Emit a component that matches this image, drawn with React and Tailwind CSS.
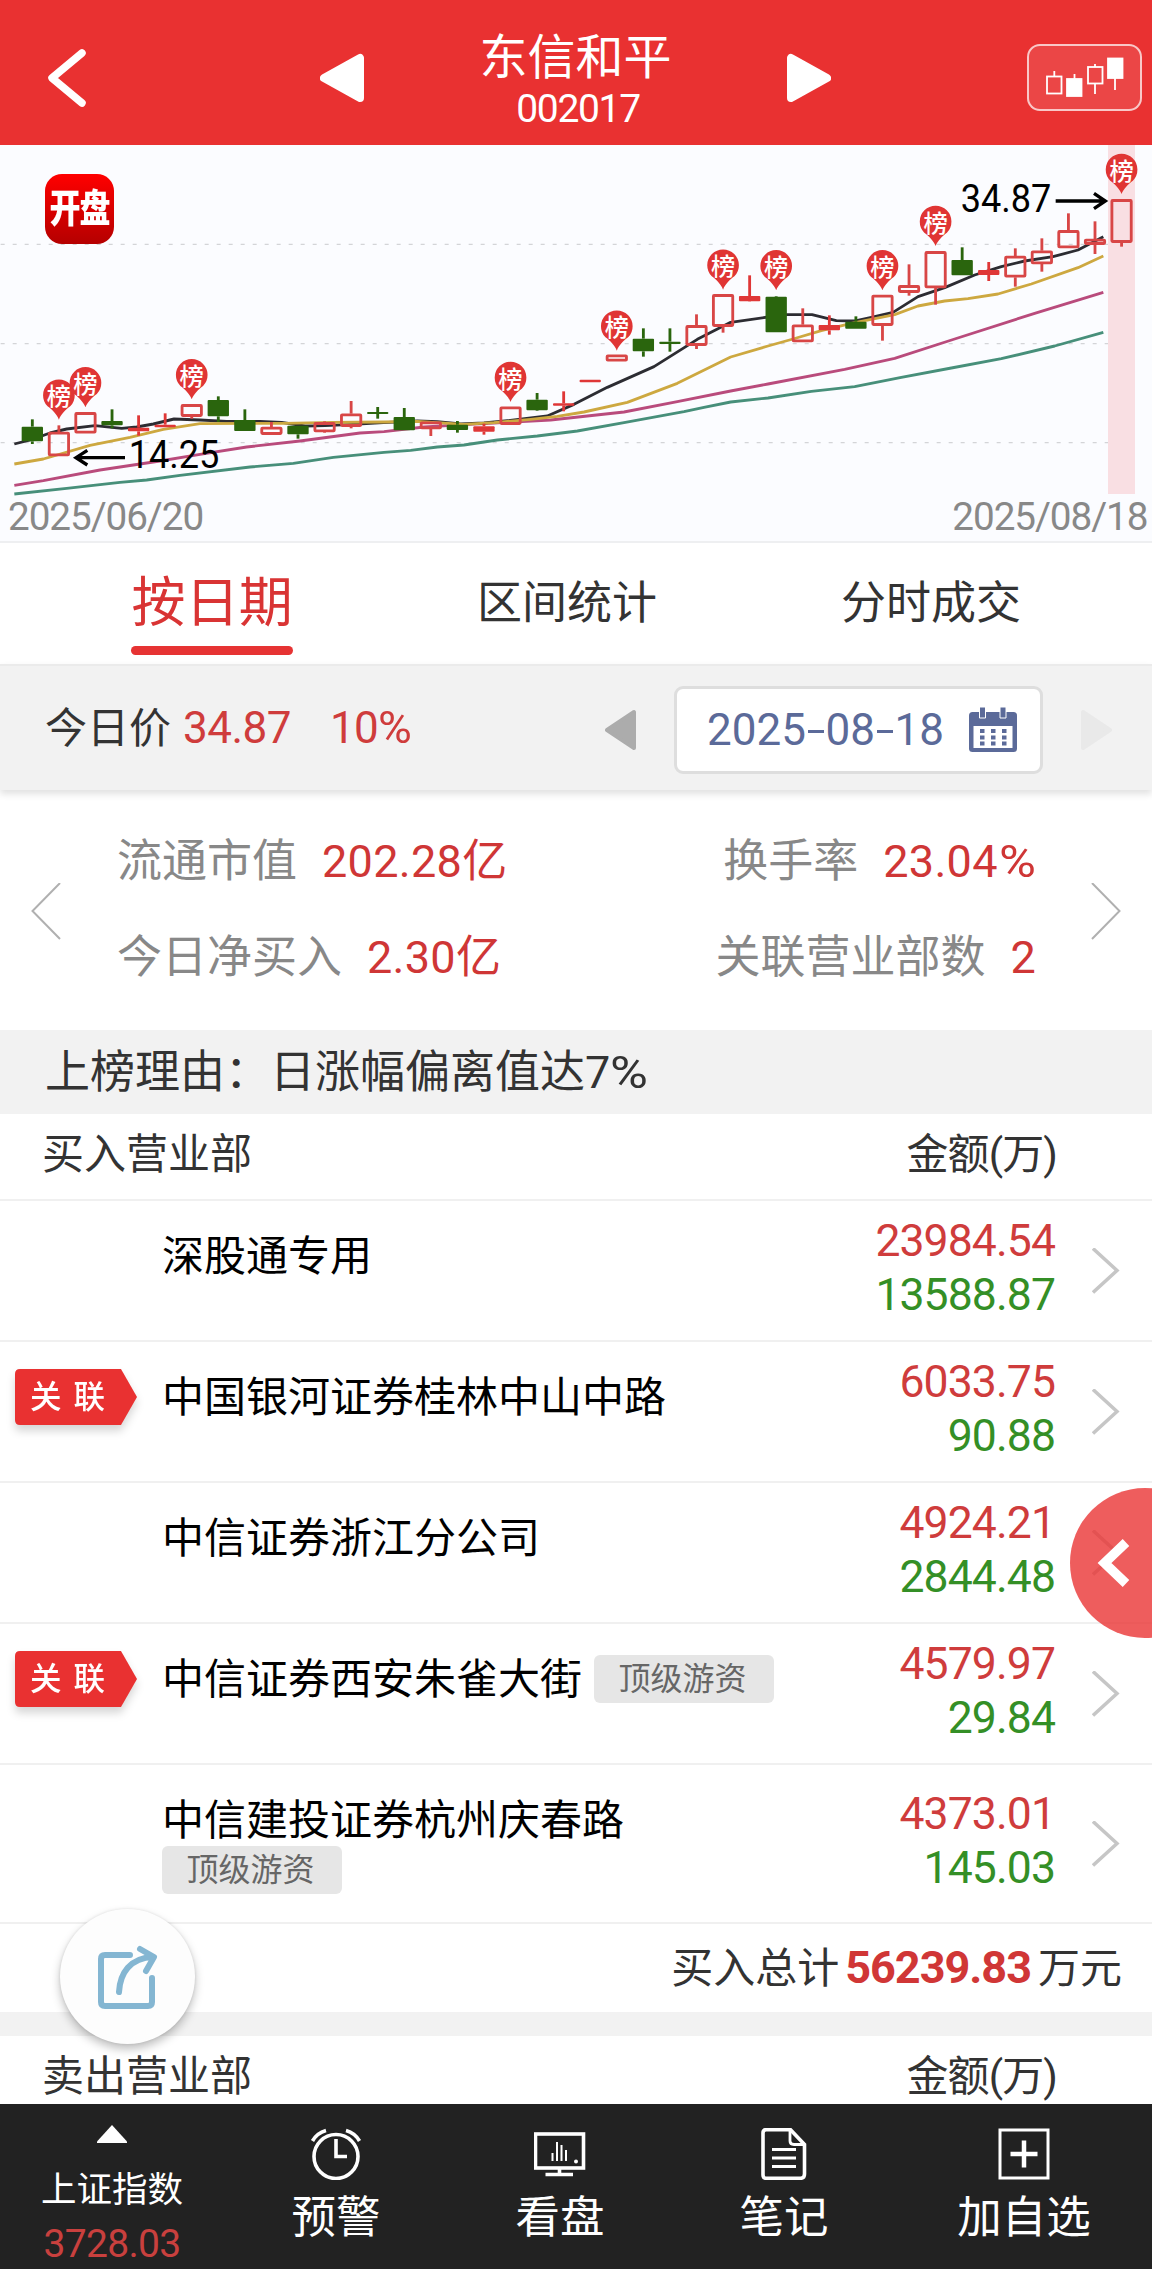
import React from "react";

const CANDLES = [
  ["g", 845, 889, 823, 897],
  ["r", 861, 933, 841, 933],
  ["r", 802, 865, 802, 865],
  ["g", 828, 841, 793, 850],
  ["f", 848, 859, 811, 872],
  ["f", 839, 847, 805, 847],
  ["r", 778, 815, 778, 821],
  ["g", 765, 814, 754, 831],
  ["g", 825, 858, 793, 858],
  ["r", 846, 869, 831, 869],
  ["g", 842, 868, 842, 881],
  ["r", 832, 861, 829, 863],
  ["r", 806, 845, 768, 850],
  ["g", 801, 807, 786, 821],
  ["g", 816, 856, 789, 856],
  ["r", 830, 852, 830, 873],
  ["g", 839, 855, 828, 863],
  ["f", 844, 860, 836, 869],
  ["r", 785, 839, 785, 839],
  ["g", 764, 796, 744, 798],
  ["f", 775, 782, 739, 799],
  ["f", 704, 712, 704, 712],
  ["r", 629, 649, 629, 649],
  ["g", 581, 619, 550, 635],
  ["g", 590, 597, 550, 620],
  ["r", 541, 602, 508, 612],
  ["r", 448, 545, 448, 563],
  ["f", 453, 469, 391, 470],
  ["g", 455, 562, 453, 562],
  ["r", 539, 591, 490, 591],
  ["f", 540, 556, 511, 569],
  ["g", 530, 551, 514, 551],
  ["r", 450, 542, 450, 587],
  ["r", 421, 443, 358, 452],
  ["r", 319, 429, 319, 479],
  ["g", 345, 391, 307, 391],
  ["f", 375, 390, 351, 408],
  ["r", 333, 397, 310, 425],
  ["r", 317, 357, 280, 380],
  ["r", 256, 309, 205, 309],
  ["r", 282, 299, 229, 327],
  ["r", 163, 293, 163, 305],
];

const PINS = [
  [1, 824], [2, 787], [6, 763], [18, 771], [22, 617],
  [26, 434], [28, 436], [32, 436], [34, 303], [41, 147],
];

const LINES = [
  ["#478f7a", "43,1047 200,1030 360,1012 440,1005 540,991 750,966 880,955 1000,937 1152,922 1232,916 1312,906 1392,900 1492,885 1612,873 1732,858 1872,833 2052,800 2112,787 2192,771 2304,759 2434,739 2564,725 2704,697 2854,669 3004,641 3164,603 3310,562"],
  ["#b94b7c", "43,1021 130,1007 300,975 480,948 600,928 740,906 900,888 1080,864 1152,860 1272,846 1392,839 1482,834 1652,825 1872,801 2032,770 2192,738 2304,717 2534,673 2684,640 2864,582 3104,505 3310,442"],
  ["#2c2c32", "43,897 97,883 150,864 200,852 285,842 365,850 410,846 460,837 522,822 600,825 680,829 780,829 845,832 915,843 975,842 1060,838 1150,833 1252,828 1312,830 1382,837 1452,834 1522,827 1642,813 1722,778 1822,727 1962,665 2092,583 2192,532 2304,516 2362,509 2436,509 2509,527 2566,528 2614,517 2679,502 2754,455 2834,428 2924,390 3004,365 3074,348 3159,335 3234,315 3310,275"],
  ["#cda840", "43,957 130,942 270,901 390,877 490,853 600,836 850,835 1000,832 1152,831 1252,829 1392,838 1482,833 1592,823 1672,814 1752,801 1882,772 2032,715 2192,636 2304,603 2379,582 2464,557 2554,535 2684,509 2754,483 2834,468 2904,461 2994,447 3094,417 3234,368 3310,333"],
];

const CHART_FONT = 'Roboto, "Noto Sans CJK SC", sans-serif';

function Candle({ i, c }) {
  const [kind, top, bottom, high, low] = c;
  const x = 97 + 79.7 * i;
  const color = kind === "g" ? "#2a650d" : kind === "f" ? "#df3737" : "#d84646";
  return (
    <g stroke={color} strokeWidth="8.500">
      {high < top && <line x1={x} x2={x} y1={high} y2={top} />}
      {low > bottom && <line x1={x} x2={x} y1={bottom} y2={low} />}
      {kind === "r" ? (
        <rect x={x - 29} y={top + 3.5} width="58" height={bottom - top - 7} rx="2" fill="none" strokeWidth="8.500" />
      ) : (
        <rect x={x - 32} y={top} width="64" height={bottom - top} rx="3" fill={color} stroke="none" />
      )}
    </g>
  );
}

function Chart() {
  return (
    <svg viewBox="0 0 3456 1188" className="block h-[396px] w-full bg-[#fbfcff]" fontFamily={CHART_FONT}>
      {[298, 596, 893].map((y) => (
        <line key={y} x1="2" x2="3396" y1={y} y2={y} stroke="#d3d4d7" strokeWidth="3.5" strokeDasharray="12 24" />
      ))}
      <rect x="3324" y="0" width="81" height="1047" fill="#f9dfe3" />
      {LINES.map(([color, points]) => (
        <polyline key={color} points={points} fill="none" stroke={color} strokeWidth="8.500" strokeLinejoin="round" />
      ))}
      {CANDLES.map((c, i) => (
        <Candle key={i} i={i} c={c} />
      ))}
      {PINS.map(([i, y]) => (
        <g key={i} transform={`translate(${97 + 79.7 * i} ${y})`}>
          <path d="M0 0C-6-16-20-30-34-40A47.500 47.500 0 1 1 34-40C20-30 6-16 0 0Z" fill="#e03534" />
          <text y="-43" textAnchor="middle" fontSize="73" fontWeight="500" fill="#fff">榜</text>
        </g>
      ))}
      <g stroke="#000" strokeWidth="10" fill="none">
        <path d="M3167 168H3312M3282 145L3316 168L3282 191" />
        <path d="M375 938H232M262 916L228 938L262 960" />
      </g>
      <text x="2882" y="200" fontSize="115" textLength="272" lengthAdjust="spacingAndGlyphs">34.87</text>
      <text x="386" y="970" fontSize="115" textLength="272" lengthAdjust="spacingAndGlyphs">14.25</text>
      <g fontSize="116" fill="#888" letterSpacing="-3.2">
        <text x="24" y="1154">2025/06/20</text>
        <text x="2857" y="1154">2025/08/18</text>
      </g>
    </svg>
  );
}

function Header() {
  return (
    <header className="flex h-[145px] items-center bg-[#e93131] text-white">
      <svg className="ml-[44px] mt-[10px] h-[62px] w-[46px]" viewBox="0 0 46 62" fill="none" stroke="#fff" strokeWidth="7.500" strokeLinecap="round" strokeLinejoin="round">
        <path d="M38 6L8 31L38 56" />
      </svg>
      <svg className="ml-[230px] mt-[10px] h-[50px] w-[44px]" viewBox="0 0 44 50" fill="#fff" stroke="#fff" strokeWidth="8" strokeLinejoin="round">
        <path d="M40 5V45L4 25Z" />
      </svg>
      <div className="flex w-[423px] flex-col items-center pt-[14px]">
        <div className="h-[60px] text-[48px] leading-[60px]">东信和平</div>
        <div className="mt-[-1px] h-[44px] pl-[5px] text-[39px] leading-[44px] tracking-[-1.300px]">002017</div>
      </div>
      <svg className="mt-[10px] h-[50px] w-[44px]" viewBox="0 0 44 50" fill="#fff" stroke="#fff" strokeWidth="8" strokeLinejoin="round">
        <path d="M4 5V45L40 25Z" />
      </svg>
      <div className="ml-[196px] mt-[10px] h-[67px] w-[115px] rounded-[13px] border-2 border-white/70 bg-white/10">
        <svg className="h-[63px] w-[111px]" viewBox="1029 46 111 63" fill="none" stroke="#fff" strokeWidth="1.800">
          <rect x="1047" y="76.500" width="14.500" height="17" />
          <path d="M1054.300 71V76M1074.500 74V79M1095 64V67M1095 84V94M1115 78V90" />
          <rect x="1067" y="79" width="14.500" height="17" fill="#fff" />
          <rect x="1088" y="67" width="14.500" height="16.500" />
          <rect x="1108" y="58.500" width="14.500" height="19.500" fill="#fff" />
        </svg>
      </div>
    </header>
  );
}

function Tabs() {
  return (
    <nav className="flex h-[123px] justify-between border-t-2 border-[#eeeff1] bg-white px-[131px] text-[45px] text-[#333]">
      <div className="flex flex-col items-center text-[54px] text-[#d93434]">
        <span className="mt-[21px] h-[80px] leading-[80px] tracking-[-0.300px]">按日期</span>
        <span className="mt-[2px] h-[9px] w-[162px] rounded-full bg-[#e63333]" />
      </div>
      <span className="mt-[21px] h-[80px] leading-[80px]">区间统计</span>
      <span className="mt-[21px] h-[80px] leading-[80px]">分时成交</span>
    </nav>
  );
}

function DateBar() {
  return (
    <div className="relative flex h-[126px] items-center border-t-2 border-[#ebebeb] bg-[#f2f2f2] shadow-[0_4px_7px_rgba(0,0,0,0.12)]">
      <span className="ml-[45px] w-[127px] text-[42px] text-[#333]">今日价</span>
      <span className="ml-[11px] w-[147px] text-[44px] tracking-[-0.500px] text-[#cf3c3c]">34.87</span>
      <span className="w-[275px] text-[44px] tracking-[-0.800px] text-[#cf3c3c]">
        10<span className="inline-block origin-left scale-x-105">%</span>
      </span>
      <svg className="mt-1 h-[42px] w-[31px]" viewBox="0 0 31 42" fill="#acacac" stroke="#acacac" strokeWidth="4" strokeLinejoin="round">
        <path d="M29 3V39L2 21Z" />
      </svg>
      <div className="ml-[38px] mt-[3px] flex h-[88px] w-[369px] items-center rounded-[9px] border-[3px] border-[#dedede] bg-white">
        <span className="ml-[30px] flex w-[237px] items-center justify-between text-[44px] text-[#5b6a99]">
          <span>2025</span><i className="mt-1 h-[3.500px] w-[16px] bg-[#5b6a99]" /><span>08</span><i className="mt-1 h-[3.500px] w-[16px] bg-[#5b6a99]" /><span>18</span>
        </span>
        <svg className="ml-[25px] h-[46px] w-[48px]" viewBox="0 0 48 46">
          <rect x="0" y="5" width="48" height="40" rx="3.500" fill="#5b6a99" />
          <rect x="4.500" y="19" width="39" height="22" fill="#fff" />
          <path d="M10.500 0h6v11h-6zM31 0h6v11h-6z" fill="#5b6a99" stroke="#fff" strokeWidth="1" />
          <path d="M11 24h28M11 30.500h28M11 36.500h28" stroke="#5b6a99" strokeWidth="4" strokeDasharray="4.500 6.500" />
        </svg>
      </div>
      <svg className="ml-[38px] mt-1 h-[42px] w-[31px]" viewBox="0 0 31 42" fill="#e9e9e9" stroke="#e9e9e9" strokeWidth="4" strokeLinejoin="round">
        <path d="M2 3V39L29 21Z" />
      </svg>
    </div>
  );
}

function Stat({ label, value, percent }) {
  return (
    <div className="flex h-[96px] items-center gap-[25px]">
      <span className="text-[#888]">{label}</span>
      <span className="tracking-[0.300px] text-[#cf3636]">
        {value}
        {percent && <span className="ml-[1px] inline-block origin-left scale-x-112 pr-[4px]">%</span>}
      </span>
    </div>
  );
}

function Stats() {
  return (
    <section className="flex h-[240px] items-center bg-white text-[45px]">
      <svg className="ml-[31px] mt-1 h-[58px] w-[30px]" viewBox="0 1 30 58" fill="none" stroke="#b0b0b0" strokeWidth="2">
        <path d="M29 1L1.500 29L29 57" />
      </svg>
      <div className="ml-[56px] flex w-[919px] justify-between">
        <div className="flex flex-col">
          <Stat label="流通市值" value="202.28亿" />
          <Stat label="今日净买入" value="2.30亿" />
        </div>
        <div className="flex flex-col items-end">
          <Stat label="换手率" value="23.04" percent />
          <Stat label="关联营业部数" value="2" />
        </div>
      </div>
      <svg className="ml-[55px] mt-1 h-[58px] w-[30px]" viewBox="0 1 30 58" fill="none" stroke="#b0b0b0" strokeWidth="2">
        <path d="M1 1L28.500 29L1 57" />
      </svg>
    </section>
  );
}

function LinkTag() {
  return (
    <svg className="ml-[15px] mb-[30px] h-[56px] w-[122px] overflow-visible drop-shadow-[0_6px_4px_rgba(0,0,0,0.16)]" viewBox="0 0 122 56">
      <path d="M5 0H106L122 28L106 56H5Q0 56 0 51V5Q0 0 5 0Z" fill="#e93131" />
      <text x="15" y="39" fontSize="31.500" fontWeight="500" fill="#fff" letterSpacing="12" fontFamily={CHART_FONT}>关联</text>
    </svg>
  );
}

function HotTag() {
  return (
    <span className="flex h-[48px] w-[180px] items-center justify-center rounded-[6px] bg-[#e6e6e6] pr-[3px] text-[32px] leading-[48px] text-[#666]">
      顶级游资
    </span>
  );
}

function Row({ name, buy, sell, linked, hot }) {
  const stacked = hot === "below";
  return (
    <div className={`flex items-center border-b-2 border-[#f0f0f0] bg-white ${stacked ? "h-[159px]" : "h-[141px]"}`}>
      <div className="w-[162px] shrink-0">{linked && <LinkTag />}</div>
      <div className={`flex flex-1 ${stacked ? "flex-col items-start" : "items-center gap-3 pb-[30px]"}`}>
        <span className="h-[52px] text-[42px] leading-[54px] text-black">{name}</span>
        {hot && <HotTag />}
      </div>
      <div className="flex flex-col items-end pb-[6px] text-[44.500px] leading-[54px] tracking-[-0.900px]">
        <span className="text-[#cf3c3c]">{buy}</span>
        <span className="text-[#348f26]">{sell}</span>
      </div>
      <svg className="ml-[37px] mr-[31px] h-[46px] w-[29px]" viewBox="0 0 29 46" fill="none" stroke="#c6c6c6" strokeWidth="3.500">
        <path d="M1 .5L25 22.500L1 44.500" />
      </svg>
    </div>
  );
}

const ROWS = [
  { name: "深股通专用", buy: "23984.54", sell: "13588.87" },
  { name: "中国银河证券桂林中山中路", buy: "6033.75", sell: "90.88", linked: true },
  { name: "中信证券浙江分公司", buy: "4924.21", sell: "2844.48" },
  { name: "中信证券西安朱雀大街", buy: "4579.97", sell: "29.84", linked: true, hot: "inline" },
  { name: "中信建投证券杭州庆春路", buy: "4373.01", sell: "145.03", hot: "below" },
];

function NavItem({ label, children }) {
  return (
    <div className="flex w-[224px] flex-col items-center pt-[24px]">
      <svg className="h-[52px] w-[52px]" viewBox="0 0 52 52" fill="none" stroke="#fff" strokeWidth="3.600">
        {children}
      </svg>
      <span className="mt-[8px] text-[44.500px] leading-[60px]">{label}</span>
    </div>
  );
}

function BottomNav() {
  return (
    <footer className="flex h-[165px] bg-[#222] text-white">
      <div className="flex w-[224px] flex-col items-center">
        <svg className="mt-[21px] h-[18px] w-[30px]" viewBox="0 0 30 18" fill="#fff">
          <path d="M15 0L30 16.500V18H0V16.500Z" />
        </svg>
        <span className="mt-[20px] h-[54px] text-[35.500px] leading-[54px]">上证指数</span>
        <span className="h-[52px] text-[39px] leading-[54px] tracking-[-0.700px] text-[#c9403e]">3728.03</span>
      </div>
      <NavItem label="预警">
        <circle cx="26" cy="28.500" r="22" />
        <path d="M26 11V28.500H37" />
        <path d="M2.500 13Q7 5 16 2.500M49.500 13Q45 5 36 2.500" />
      </NavItem>
      <NavItem label="看盘">
        <rect x="1.500" y="6" width="48" height="34" />
        <path d="M25.500 40V46M11.500 46.500H39" />
        <path d="M18.500 25V33M23 14V33M27.500 17V33M32 22V33" strokeWidth="2" />
        <circle cx="42" cy="33.500" r="2" fill="#fff" stroke="none" />
      </NavItem>
      <NavItem label="笔记">
        <path d="M8 1.700H32.500L46.500 16.500V46Q46.500 50.300 42.500 50.300H8Q5 50.300 5 47V5Q5 1.700 8 1.700Z" />
        <path d="M32 2V13Q32 16.500 36 16.500H46M14 21.500H38M14 30H38M14 38.500H38" strokeWidth="2.800" />
      </NavItem>
      <div className="flex w-[256px] flex-col items-center pt-[24px]">
        <svg className="h-[52px] w-[52px]" viewBox="0 0 52 52" fill="none" stroke="#fff" strokeWidth="3">
          <rect x="2" y="2" width="48" height="48" />
          <path d="M26 12.500V39.500M12.500 26H39.500" strokeWidth="4.500" />
        </svg>
        <span className="mt-[8px] text-[44.500px] leading-[60px]">加自选</span>
      </div>
    </footer>
  );
}

function TableHead({ title, className }) {
  return (
    <div className={`flex justify-between bg-white pl-[42px] pr-[95px] text-[42px] text-[#333] ${className}`}>
      <span>{title}</span>
      <span className="tracking-[-0.900px]">金额(万)</span>
    </div>
  );
}

export default function App() {
  return (
    <div className="relative h-[2269px] w-[1152px] overflow-hidden bg-white font-[Roboto,'Noto_Sans_CJK_SC',sans-serif] whitespace-nowrap">
      <Header />
      <div className="relative">
        <Chart />
        <div className="absolute left-[45px] top-[29px] flex h-[70px] w-[69px] items-center justify-center rounded-[17px] bg-linear-to-b from-[#ff0000] to-[#b50000] text-[31px] font-black tracking-[-1px] text-white">
          <span className="mt-[3px] scale-y-125">开盘</span>
        </div>
      </div>
      <Tabs />
      <DateBar />
      <Stats />
      <div className="h-[84px] bg-[#f2f2f2] pl-[45px] text-[45px] leading-[85px] text-[#333]">
        上榜理由：日涨幅偏离值达7<span className="inline-block origin-left scale-x-115">%</span>
      </div>
      <TableHead title="买入营业部" className="h-[87px] border-b-2 border-[#f0f0f0] leading-[82px]" />
      {ROWS.map((r) => (
        <Row key={r.name} {...r} />
      ))}
      <div className="flex h-[88px] items-center justify-end bg-white pr-[30px] text-[42px] text-[#333]">
        <span>买入总计</span>
        <span className="ml-[6px] mr-[7px] text-[45px] font-bold tracking-[-1px] text-[#d03636]">56239.83</span>
        <span>万元</span>
      </div>
      <div className="h-[24px] bg-[#f2f2f2]" />
      <TableHead title="卖出营业部" className="h-[68px] leading-[82px]" />
      <BottomNav />

      <div className="absolute left-[1070px] top-[1488px] flex h-[150px] w-[150px] items-center rounded-full bg-[#ea3434]/80">
        <svg className="ml-[24px] h-[54px] w-[38px]" viewBox="0 0 38 54" fill="none" stroke="#fff" strokeWidth="9.500">
          <path d="M32 6.500L10.500 27L32 47.500" />
        </svg>
      </div>

      <div className="absolute left-[60px] top-[1909px] flex h-[135px] w-[135px] items-center justify-center rounded-full bg-[#fdfdfd] pr-[2px] shadow-[0_5px_10px_rgba(0,0,0,0.25),0_0_3px_rgba(0,0,0,0.1)]">
        <svg className="h-[68px] w-[64px]" viewBox="95 1942 64 68" fill="none" stroke="#84b6d2" strokeWidth="6" strokeLinecap="round" strokeLinejoin="round">
          <path d="M130 1954H105Q101 1954 101 1958V2001Q101 2005 105 2005H148Q152 2005 152 2001V1977" />
          <path d="M119 1991C120 1972 130 1957 153 1956M140 1948L154 1956L146 1970" />
        </svg>
      </div>
    </div>
  );
}
